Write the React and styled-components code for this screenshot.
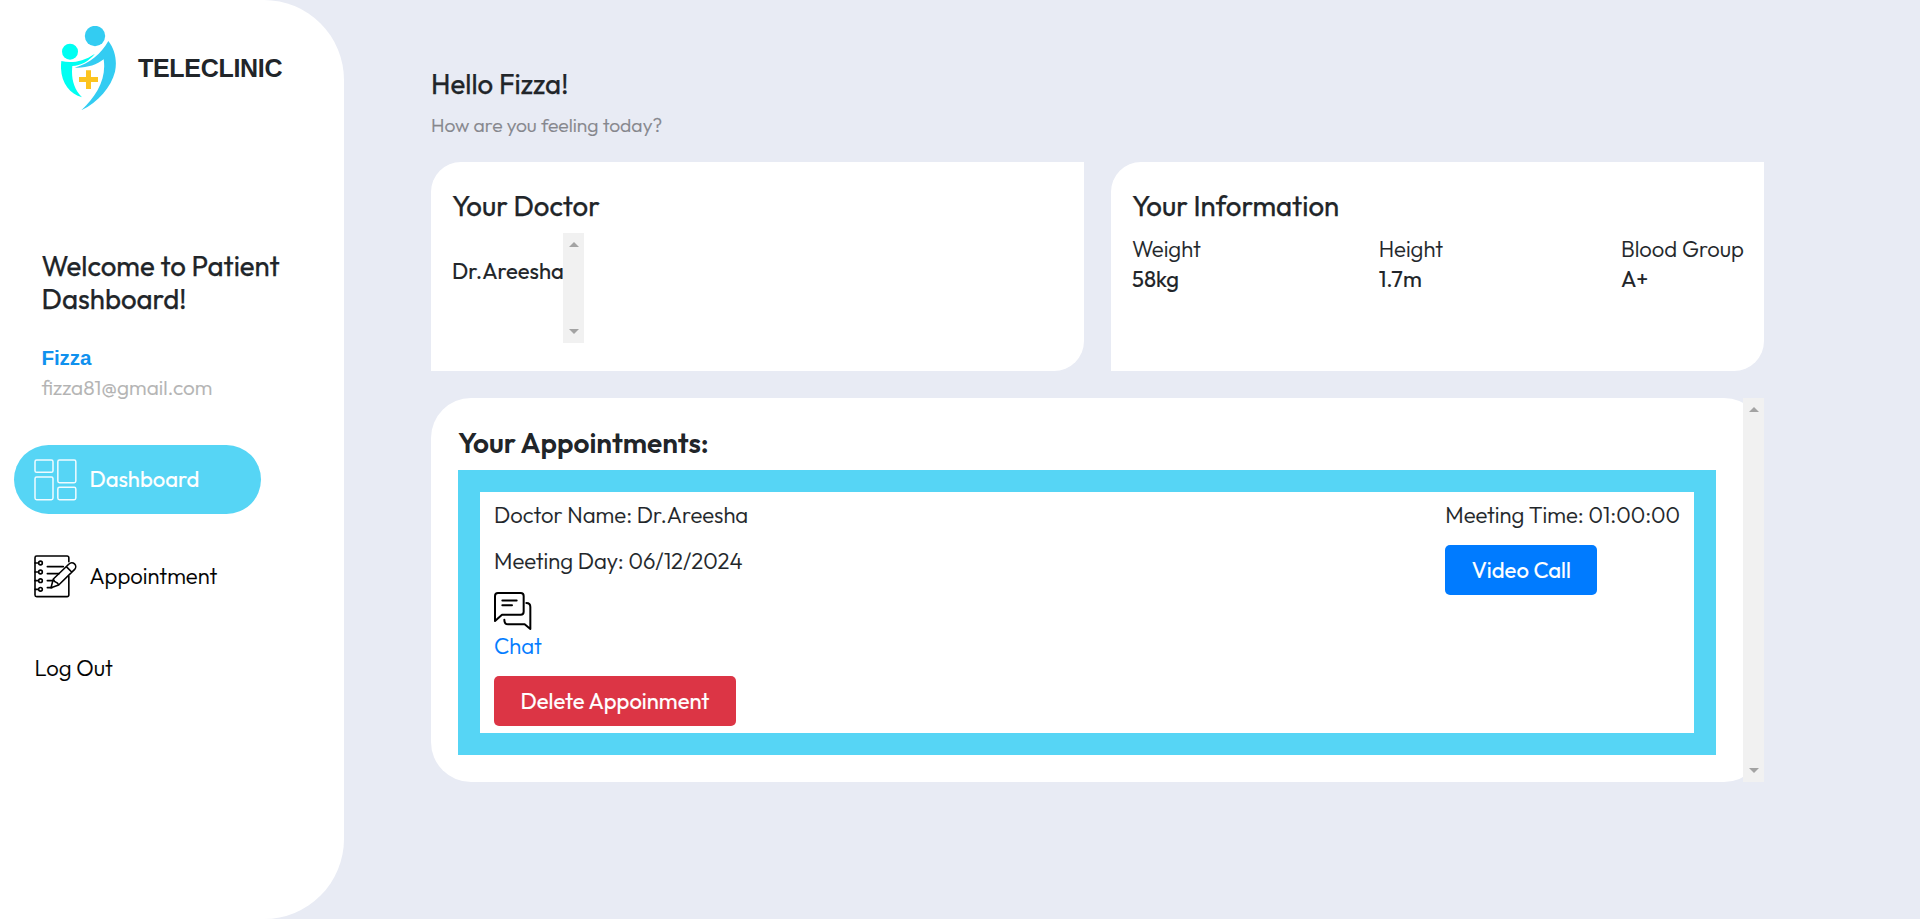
import React from 'react';
import styled, { createGlobalStyle } from 'styled-components';

const GlobalStyle = createGlobalStyle`
  *, *::before, *::after { box-sizing: border-box; }
  body {
    margin: 0;
    background: #e8ebf4;
    color: #212529;
    font-family: Outfit, Lato, sans-serif;
    font-size: 22px;
    line-height: 30px;
    overflow: hidden;
  }
`;

const sky = '#56d5f5';
const light = 300;
const regular = 400;

const Page = styled.div`
  display: flex;
  height: 919px;
`;

const Sidebar = styled.aside`
  width: 344px;
  height: 919px;
  flex: none;
  display: flex;
  flex-direction: column;
  padding-top: 26px;
  background: #fff;
  border-radius: 0 80px 80px 0;
`;

const Brand = styled.div`
  display: flex;
  align-items: center;
  gap: 22px;
  height: 85px;
  padding-left: 61px;
`;

const BrandName = styled.span`
  padding-bottom: 2px;
  font: 700 25px/30px "Liberation Sans", sans-serif;
  letter-spacing: -0.3px;
`;

const Profile = styled.section`
  display: flex;
  flex-direction: column;
  margin-top: 138px;
  padding-left: 41.5px;
`;

const Title = styled.h3`
  margin: 0;
  font-size: ${(p) => (p.$bold ? 28 : 27.6)}px;
  line-height: 33px;
  font-weight: ${(p) => (p.$bold ? 600 : regular)};
  -webkit-text-stroke: ${(p) => (p.$bold ? 0 : '0.25px')};
  white-space: nowrap;
`;

const Text = styled.span`
  display: block;
  font-weight: ${(p) => p.$weight || light};
  -webkit-text-stroke: 0.15px;
  white-space: nowrap;
`;

const UserName = styled.span`
  margin-top: 28px;
  font: 700 20.6px/30px "Liberation Sans", sans-serif;
  letter-spacing: -0.1px;
  color: #1091ee;
`;

const Email = styled.span`
  margin: -1px 0 1px;
  font-size: 20.7px;
  font-weight: ${light};
  -webkit-text-stroke: 0.2px;
  color: #b3b3b3;
`;

const Nav = styled.nav`
  display: flex;
  flex-direction: column;
  gap: 28px;
  margin: 42px 0 0 14px;
`;

const NavItem = styled.a`
  display: flex;
  align-items: center;
  gap: 12.4px;
  width: 247px;
  height: 69px;
  padding-left: 20px;
  border-radius: 35px;
  color: ${(p) => (p.$active ? '#fff' : '#000')};
  background: ${(p) => (p.$active ? sky : 'transparent')};
`;

const NavLabel = styled(Text)`
  padding-bottom: 2px;
`;

const LogOut = styled.a`
  margin: 42px 0 0 34.5px;
  color: #000;
`;

const Main = styled.main`
  width: 1333px;
  margin-left: 87px;
  padding-top: 67px;
`;

const Greeting = styled.p`
  margin: 9.6px 0 22.4px;
  font-size: 19.25px;
  font-weight: ${light};
  -webkit-text-stroke: 0.2px;
  color: #85868c;
`;

const Cards = styled.div`
  display: flex;
  gap: 27px;
`;

const Card = styled.section`
  flex: 1;
  height: 209px;
  padding: 27px 20px 0 21px;
  background: #fff;
  border-radius: 30px 0;
`;

const ScrollList = styled.div`
  display: flex;
  width: 132px;
  height: 110px;
  margin-top: 11px;
`;

const ListBody = styled.div`
  width: 111px;
  flex: none;
  padding-top: 23px;
`;

const Track = styled.div`
  width: 21px;
  flex: none;
  display: flex;
  flex-direction: column;
  justify-content: space-between;
  align-items: center;
  padding: 9px 0;
  background: #f1f1f1;
`;

const Arrow = styled.i`
  width: 0;
  height: 0;
  border: 4.9px solid transparent;
  border-top: ${(p) => (p.$down ? '5px solid #a3a3a3' : '0')};
  border-bottom: ${(p) => (p.$down ? '0' : '5px solid #a3a3a3')};
  border-left-width: 5px;
  border-right-width: 5px;
`;

const Stats = styled.div`
  display: flex;
  justify-content: space-between;
  margin-top: 12px;
`;

const AppointmentsFrame = styled.section`
  display: flex;
  height: 384px;
  margin-top: 27px;
  background: #fff;
  border-radius: 40px;
`;

const AppointmentsBody = styled.div`
  flex: 1;
  padding: 28px 27px 0;
`;

const Appointment = styled.article`
  display: flex;
  justify-content: space-between;
  height: 285px;
  margin-top: 11px;
  padding: 8px 14px 0;
  border: 22px solid ${sky};
`;

const Details = styled.div`
  display: flex;
  flex-direction: column;
  align-items: flex-start;
`;

const DayLine = styled(Text)`
  margin-top: 16px;
`;

const ChatLink = styled.a`
  display: flex;
  flex-direction: column;
  margin-top: 16px;
  color: #007bff;
`;

const Button = styled.button`
  height: 50px;
  width: ${(p) => p.$w}px;
  margin-top: 15px;
  padding: 0;
  border: 0;
  border-radius: 5px;
  background: ${(p) => p.$bg};
  color: #fff;
  font: inherit;
  font-weight: ${regular};
  -webkit-text-stroke: 0.15px;
`;

const Icon = styled.svg`
  display: block;
  flex: none;
`;

const Logo = () => (
  <Icon width="55" height="85" viewBox="183 78 165 255">
    <circle cx="285" cy="108" r="30.5" fill="#33ccf2" />
    <circle cx="210" cy="155" r="24" fill="#00fff2" />
    <path fill="#00fff2" d="M184 183C212 190 247 187 285 161C266 184 242 197 217 198C213 235 221 267 246 292C205 280 177 240 184 183Z" />
    <path fill="#33ccf2" d="M325 123C345 148 352 183 345 215C333 262 295 305 244 331C289 288 320 238 311 178C290 195 258 205 224 203C270 190 303 162 325 123Z" />
    <path fill="#fcc41f" d="M258 211h15v20h21v15h-21v21h-15v-21h-21v-15h21z" />
  </Icon>
);

const DashboardIcon = () => (
  <Icon width="43" height="42" viewBox="101 86 129 126" fill="none" stroke="#f0fbff" strokeWidth="4.500">
    <rect x="104" y="89" width="54" height="37" rx="5" />
    <rect x="172.500" y="89" width="54" height="68" rx="5" />
    <rect x="104" y="140" width="54" height="68" rx="5" />
    <rect x="172.500" y="171" width="54" height="37" rx="5" />
  </Icon>
);

const NotebookIcon = () => (
  <Icon width="43" height="43" viewBox="101 374 129 129" fill="none" stroke="#000" strokeWidth="4.800" strokeLinecap="round" strokeLinejoin="round">
    <path d="M205.500 394V382a5 5 0 0 0-5-5H109a5 5 0 0 0-5 5v112a5 5 0 0 0 5 5h91.500a5 5 0 0 0 5-5V438" />
    {[398, 425, 451, 477].map((y) => (
      <g key={y}>
        <circle cx="120.500" cy={y} r="5.500" />
        <path d={`M104 ${y}H114`} />
      </g>
    ))}
    <path d="M141 409H189M141 430H176M141 451H157M141 472H155" />
    <path d="M159 446L206 401A11.500 11.500 0 0 1 223 417L175 464L152 472ZM159 446Q162 455 167 456Q172 457 175 464M198 409L214 425" />
  </Icon>
);

const ChatIcon = () => (
  <Icon width="38" height="39" viewBox="221 605 114 117" fill="none" stroke="#000" strokeWidth="6" strokeLinecap="round" strokeLinejoin="round">
    <path d="M224 692V617a9 9 0 0 1 9-9H301a9 9 0 0 1 9 9V664a9 9 0 0 1-9 9H245Z" />
    <path d="M246 630.500H289M246 645H275" />
    <path d="M318 638Q330 638 330 650V716L313 702H263Q252 702 252 688" />
  </Icon>
);

const ScrollTrack = () => (
  <Track>
    <Arrow />
    <Arrow $down />
  </Track>
);

const stats = [
  { label: 'Weight', value: '58kg' },
  { label: 'Height', value: '1.7m' },
  { label: 'Blood Group', value: 'A+' },
];

export default function App() {
  return (
    <>
      <GlobalStyle />
      <Page>
        <Sidebar>
          <Brand>
            <Logo />
            <BrandName>TELECLINIC</BrandName>
          </Brand>
          <Profile>
            <Title>Welcome to Patient</Title>
            <Title>Dashboard!</Title>
            <UserName>Fizza</UserName>
            <Email>fizza81@gmail.com</Email>
          </Profile>
          <Nav>
            <NavItem $active>
              <DashboardIcon />
              <NavLabel $weight={regular}>Dashboard</NavLabel>
            </NavItem>
            <NavItem>
              <NotebookIcon />
              <NavLabel>Appointment</NavLabel>
            </NavItem>
          </Nav>
          <LogOut>
            <Text>Log Out</Text>
          </LogOut>
        </Sidebar>
        <Main>
          <Title>Hello Fizza!</Title>
          <Greeting>How are you feeling today?</Greeting>
          <Cards>
            <Card>
              <Title>Your Doctor</Title>
              <ScrollList>
                <ListBody>
                  <Text $weight={regular}>Dr.Areesha</Text>
                </ListBody>
                <ScrollTrack />
              </ScrollList>
            </Card>
            <Card>
              <Title>Your Information</Title>
              <Stats>
                {stats.map((s) => (
                  <div key={s.label}>
                    <Text>{s.label}</Text>
                    <Text $weight={regular}>{s.value}</Text>
                  </div>
                ))}
              </Stats>
            </Card>
          </Cards>
          <AppointmentsFrame>
            <AppointmentsBody>
              <Title $bold>Your Appointments:</Title>
              <Appointment>
                <Details>
                  <Text>Doctor Name: Dr.Areesha</Text>
                  <DayLine>Meeting Day: 06/12/2024</DayLine>
                  <ChatLink>
                    <ChatIcon />
                    <Text>Chat</Text>
                  </ChatLink>
                  <Button $w={242} $bg="#dc3545">Delete Appoinment</Button>
                </Details>
                <Details>
                  <Text>Meeting Time: 01:00:00</Text>
                  <Button $w={152} $bg="#007bff">Video Call</Button>
                </Details>
              </Appointment>
            </AppointmentsBody>
            <ScrollTrack />
          </AppointmentsFrame>
        </Main>
      </Page>
    </>
  );
}
